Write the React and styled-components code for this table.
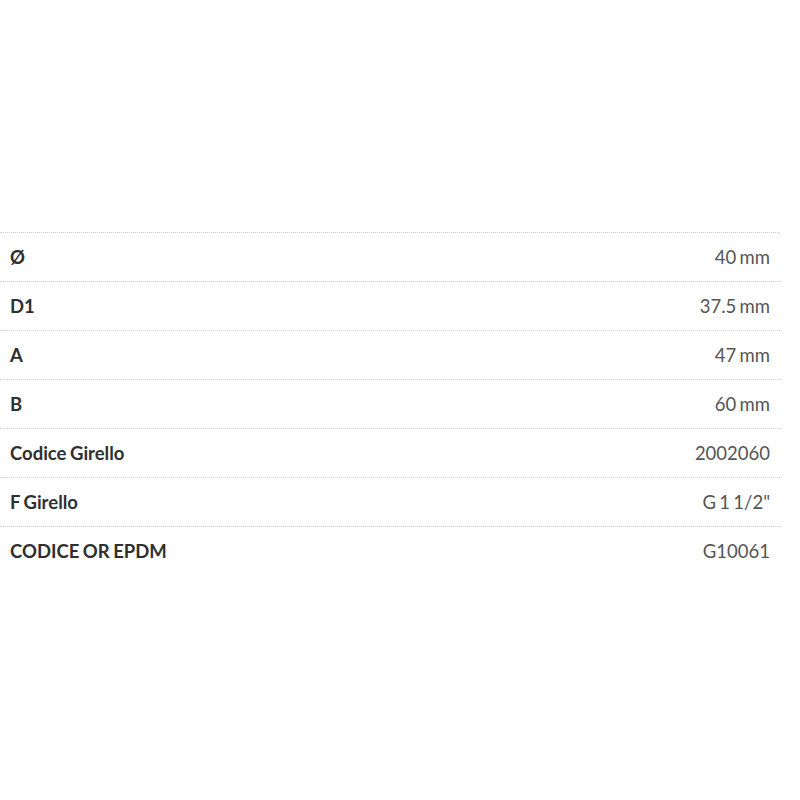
import styled, { createGlobalStyle } from "styled-components";

const GlobalStyle = createGlobalStyle`
  body {
    margin: 0;
    background: #fff;
    font-family: Lato, "Liberation Sans", sans-serif;
  }
`;

const Page = styled.div`
  padding: 232px 20px 0 0;
`;

const Table = styled.div`
  display: flex;
  flex-direction: column;
`;

const Row = styled.div`
  display: flex;
  justify-content: space-between;
  align-items: center;
  height: 48px;
  padding: 0 10px;
  border-top: 1px dotted #cfcfcf;
  font-size: 18.5px;
`;

const Label = styled.span`
  font-weight: 700;
  color: #2f2f2f;
  word-spacing: -1px;
`;

const Value = styled.span`
  color: #555;
  word-spacing: -1.5px;
`;

const rows = [
  ["Ø", "40 mm"],
  ["D1", "37.5 mm"],
  ["A", "47 mm"],
  ["B", "60 mm"],
  ["Codice Girello", "2002060"],
  ["F Girello", "G 1 1/2\""],
  ["CODICE OR EPDM", "G10061"],
];

const App = () => (
  <>
    <GlobalStyle />
    <Page>
      <Table>
        {rows.map(([label, value]) => (
          <Row key={label}>
            <Label>{label}</Label>
            <Value>{value}</Value>
          </Row>
        ))}
      </Table>
    </Page>
  </>
);

export default App;
